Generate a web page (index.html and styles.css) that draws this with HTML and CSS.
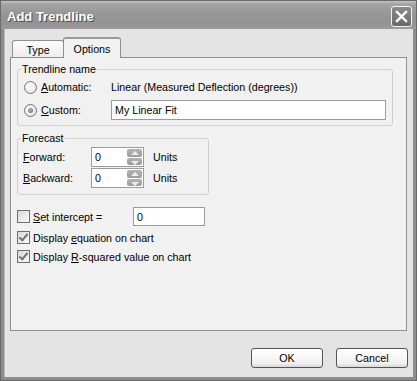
FILE: index.html
```html
<!DOCTYPE html>
<html lang="en">
<head>
    <meta charset="UTF-8">
    <title>Add Trendline</title>
    <link rel="stylesheet" href="styles.css">
</head>
<body>
    <div class="window">
        <div class="titlebar">
            <span class="title">Add Trendline</span>
            <span class="close">
                <svg width="13" height="13" viewBox="0 0 13 13">
                    <path d="M2 2 L11 11 M11 2 L2 11" stroke="#fff" stroke-width="2.4" stroke-linecap="square"/>
                </svg>
            </span>
        </div>

        <div class="client">
            <div class="tabs">
                <div class="tab">Type</div>
                <div class="tab selected">Options</div>
            </div>

            <div class="panel">
                <!-- Trendline name -->
                <fieldset class="group name-group">
                    <legend>Trendline name</legend>
                    <div class="row first">
                        <span class="radio"></span>
                        <span class="label"><u>A</u>utomatic:</span>
                        <span>Linear (Measured Deflection (degrees))</span>
                    </div>
                    <div class="row second">
                        <span class="radio checked"></span>
                        <span class="label"><u>C</u>ustom:</span>
                        <span class="textbox name-box">My Linear Fit</span>
                    </div>
                </fieldset>

                <!-- Forecast -->
                <fieldset class="group forecast-group">
                    <legend>Forecast</legend>
                    <div class="row first">
                        <span class="label"><u>F</u>orward:</span>
                        <span class="textbox spin">0
                            <span class="spin-btns">
                                <span class="spin-btn up"></span>
                                <span class="spin-btn down"></span>
                            </span>
                        </span>
                        <span class="units">Units</span>
                    </div>
                    <div class="row second">
                        <span class="label"><u>B</u>ackward:</span>
                        <span class="textbox spin">0
                            <span class="spin-btns">
                                <span class="spin-btn up"></span>
                                <span class="spin-btn down"></span>
                            </span>
                        </span>
                        <span class="units">Units</span>
                    </div>
                </fieldset>

                <div class="check-row intercept">
                    <span class="checkbox"></span>
                    <span class="label"><u>S</u>et intercept =</span>
                    <span class="textbox intercept-box">0</span>
                </div>
                <div class="check-row equation">
                    <span class="checkbox checked"></span>
                    <span class="label">Display <u>e</u>quation on chart</span>
                </div>
                <div class="check-row">
                    <span class="checkbox checked"></span>
                    <span class="label">Display <u>R</u>-squared value on chart</span>
                </div>
            </div>

            <div class="buttons">
                <button class="btn">OK</button>
                <button class="btn">Cancel</button>
            </div>
        </div>
    </div>
</body>
</html>
```

FILE: styles.css
```css
body {
    margin: 0;
    padding: 0;
    font-family: "Liberation Sans", Arial, sans-serif;
    font-size: 10.7px;
    color: #000;
}
.window {
    width: 417px;
    height: 381px;
    box-sizing: border-box;
    display: flex;
    flex-direction: column;
    background: #8d8d8d;
    border: 1px solid #6a6a6a;
}
.titlebar {
    height: 28px;
    display: flex;
    align-items: center;
    justify-content: space-between;
    padding: 0 4px 0 6px;
    background: linear-gradient(#c4c4c4 0, #a4a4a4 3px, #979797 12px, #929292 22px, #9c9c9c 28px);
}
.title {
    color: #fff;
    font-weight: bold;
    font-size: 13px;
    text-shadow: 1px 1px 0 #4a4a4a;
    margin-top: 2px;
}
.close {
    width: 19px;
    height: 19px;
    border: 1px solid #f4f4f4;
    border-radius: 3px;
    background: linear-gradient(#8a8a8a, #6a6a6a);
    display: flex;
    align-items: center;
    justify-content: center;
    margin-top: 2px;
}
.client {
    flex: 1;
    margin: 0 3px 3px 3px;
    background: #e4e4e4;
    padding: 8px 0 0 5px;
    border-left: 1px solid #b8b8b8;
}

/* tabs */
.tabs {
    height: 21px;
    display: flex;
    align-items: flex-end;
    padding-left: 2px;
    margin-bottom: -1px;
    position: relative;
    z-index: 1;
}
.tab {
    height: 17px;
    box-sizing: border-box;
    margin-bottom: 1px;
    width: 52px;
    border: 1px solid #8f8f8f;
    border-bottom: none;
    border-radius: 3px 3px 0 0;
    background: linear-gradient(#fdfdfd, #ededed);
    text-align: center;
    line-height: 19px;
}
.tab.selected {
    height: 21px;
    margin-bottom: 0;
    width: 58px;
    margin-left: -1px;
    border-top: 2px solid #9a9a9a;
    background: #f1f1f1;
    line-height: 20px;
}

/* panel */
.panel {
    width: 397px;
    height: 274px;
    box-sizing: border-box;
    border: 1px solid #8f8f8f;
    background: #f1f1f1;
    padding-top: 5px;
}
.group {
    margin: 0 0 0 6px;
    padding: 0 0 5px 0;
    border: 1px solid #cfcfcf;
    border-radius: 3px;
    box-sizing: border-box;
}
.group legend {
    margin-left: 3px;
    padding: 0 1px;
    line-height: 13px;
}
.name-group {
    width: 376px;
}
.forecast-group {
    width: 192px;
    margin-top: 6px;
    padding-bottom: 6px;
}
.row {
    display: flex;
    align-items: center;
    height: 20px;
}
.name-group .row {
    padding-left: 6px;
}
.name-group .row.first {
    margin-top: 1px;
}
.name-group .row.second {
    margin-top: 3px;
}
.name-group .label {
    width: 70px;
    margin-left: 4px;
}
.forecast-group .row {
    padding-left: 5px;
}
.forecast-group .row.first {
    margin-top: 2px;
}
.forecast-group .row.second {
    margin-top: 1px;
}
.forecast-group .label {
    width: 68px;
}

/* controls */
.radio {
    width: 13px;
    height: 13px;
    box-sizing: border-box;
    border: 1px solid #747474;
    border-radius: 50%;
    background: radial-gradient(circle at 40% 40%, #ffffff, #dcdcdc);
    position: relative;
}
.radio.checked::after {
    content: "";
    position: absolute;
    left: 3px;
    top: 3px;
    width: 5px;
    height: 5px;
    border-radius: 50%;
    background: radial-gradient(circle at 40% 40%, #b0b0b0, #6a6a6a);
}
.textbox {
    box-sizing: border-box;
    height: 20px;
    border: 1px solid #9c9c9c;
    background: #fff;
    display: flex;
    align-items: center;
    padding-left: 3px;
}
.name-box {
    width: 275px;
}
.spin {
    width: 53px;
    position: relative;
}
.spin-btns {
    position: absolute;
    right: 1px;
    top: 1px;
    bottom: 1px;
    width: 15px;
    display: flex;
    flex-direction: column;
    gap: 1px;
}
.spin-btn {
    flex: 1;
    border-radius: 2px;
    background: linear-gradient(#b4b4b4, #9c9c9c);
    position: relative;
}
.spin-btn::after {
    content: "";
    position: absolute;
    left: 4px;
    width: 0;
    height: 0;
    border-left: 4px solid transparent;
    border-right: 4px solid transparent;
}
.spin-btn.up::after {
    top: 2px;
    border-bottom: 4px solid #ececec;
}
.spin-btn.down::after {
    top: 3px;
    border-top: 4px solid #ececec;
}
.units {
    margin-left: 9px;
}
.check-row {
    display: flex;
    align-items: center;
    height: 19px;
    margin-left: 6px;
}
.check-row.intercept {
    margin-top: 12px;
}
.check-row.equation {
    margin-top: 2px;
}
.check-row .label {
    margin-left: 3px;
}
.intercept .label {
    width: 100px;
}
.intercept-box {
    width: 72px;
    height: 19px;
}
.checkbox {
    width: 13px;
    height: 13px;
    box-sizing: border-box;
    border: 1px solid #6e6e6e;
    background: linear-gradient(135deg, #d8d8d8, #fafafa);
    position: relative;
}
.checkbox.checked::after {
    content: "";
    position: absolute;
    left: 3px;
    top: 0px;
    width: 3px;
    height: 7px;
    border-right: 2px solid #737373;
    border-bottom: 2px solid #737373;
    transform: rotate(40deg);
}

/* buttons */
.buttons {
    display: flex;
    justify-content: flex-end;
    gap: 13px;
    margin-top: 17px;
    padding-right: 5px;
}
.btn {
    width: 72px;
    height: 20px;
    padding: 0;
    font-family: "Liberation Sans", Arial, sans-serif;
    font-size: 10.7px;
    color: #000;
    border: 1px solid #555;
    border-radius: 3px;
    background: linear-gradient(#ffffff, #f0f0f0 80%, #d8d8d8);
}
```
